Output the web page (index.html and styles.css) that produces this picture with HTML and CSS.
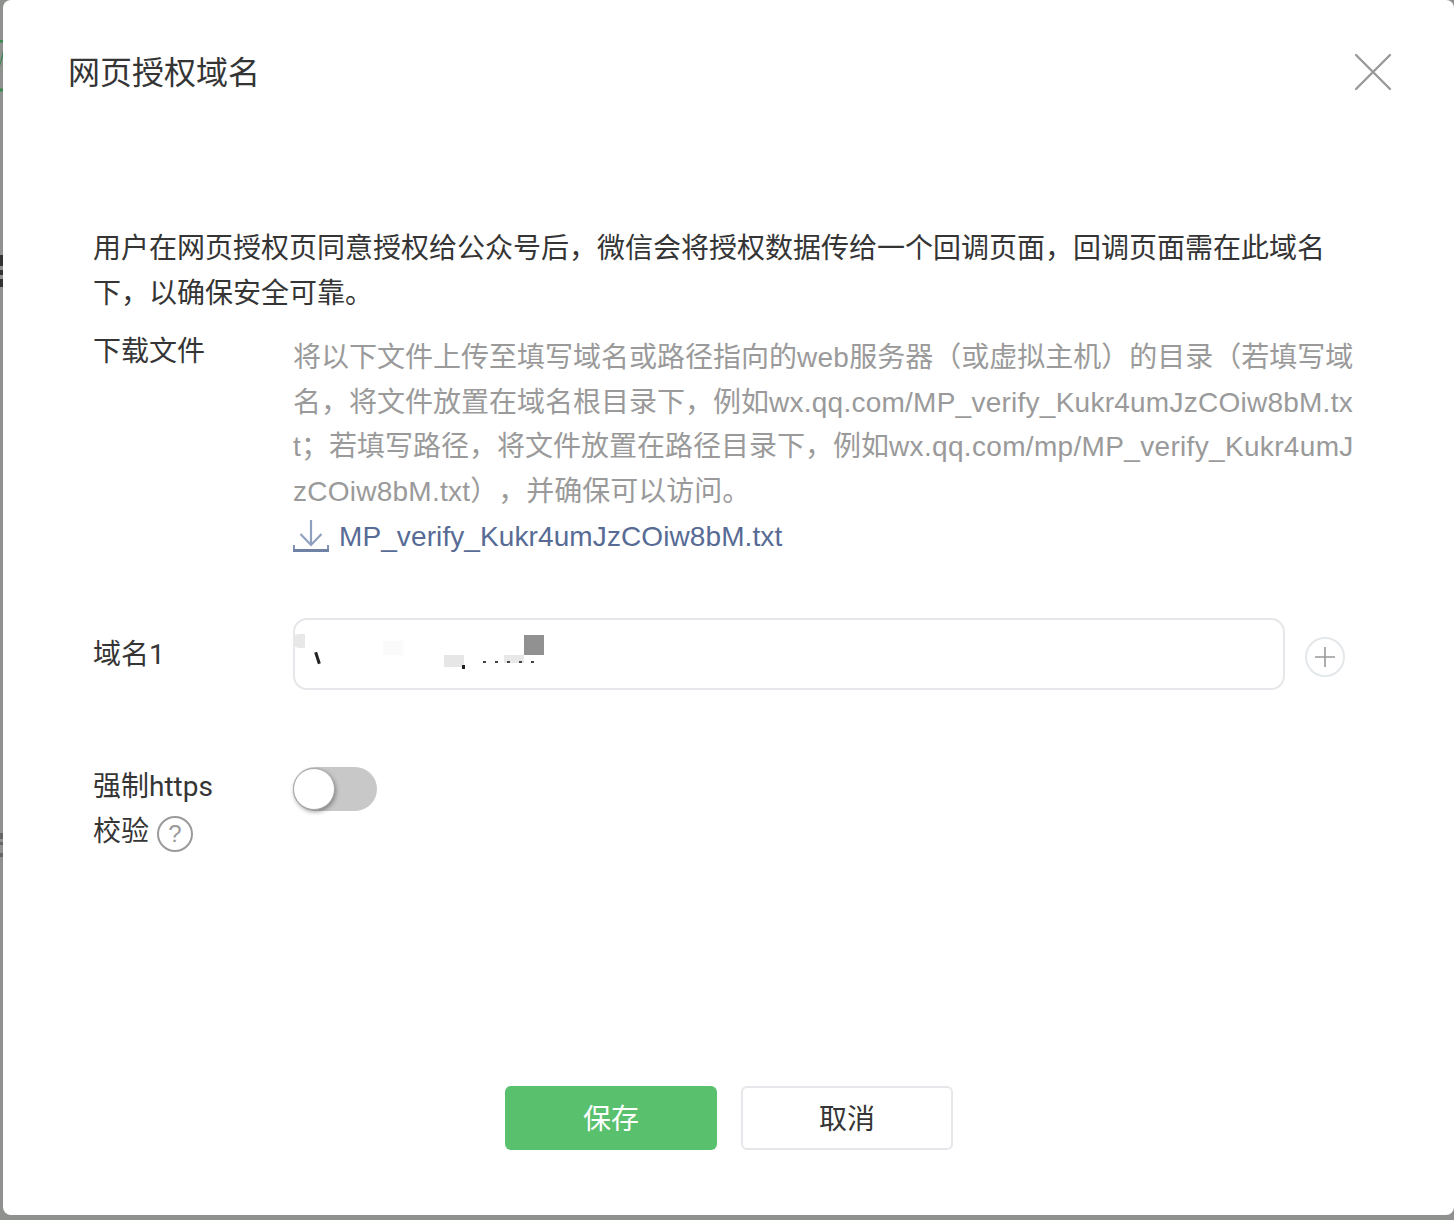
FILE: index.html
```html
<!DOCTYPE html>
<html lang="zh-CN">
<head>
<meta charset="utf-8">
<title>网页授权域名</title>
<link rel="stylesheet" href="styles.css">
</head>
<body>
<div class="backdrop">
  <svg class="bg-frag" width="3" height="900" viewBox="0 0 3 900">
    <path d="M0 40h3v2.500H0z M0 88.500h3v3H0z" fill="#3a8a50"/>
    <path d="M0 63 L3 50 V57 L0 66z" fill="#3f8a55"/>
    <path d="M0 255h3v11H0z M0 270h3v5H0z M0 279h3v8H0z" fill="#333"/>
    <path d="M0 833h3v6H0z M0 842h3v3H0z M0 853h3v4H0z" fill="#666"/>
  </svg>
  <div class="dialog">
    <header class="dialog-head">
      <h1 class="dialog-title">网页授权域名</h1>
      <button class="close" aria-label="关闭">
        <svg width="38" height="38" viewBox="0 0 38 38"><path d="M2 2 L36 36 M36 2 L2 36" stroke="#999" stroke-width="2.400" stroke-linecap="round" fill="none"/></svg>
      </button>
    </header>
    <main class="dialog-body">
      <p class="intro">用户在网页授权页同意授权给公众号后，微信会将授权数据传给一个回调页面，回调页面需在此域名<br>下，以确保安全可靠。</p>
      <section class="row row-file">
        <div class="label">下载文件</div>
        <div class="content">
          <p class="hint">将以下文件上传至填写域名或路径指向的<span class="latin">web</span>服务器（或虚拟主机）的目录（若填写域<br>名，将文件放置在域名根目录下，例如<span class="latin">wx.qq.com/MP_verify_Kukr4umJzCOiw8bM.tx</span><br><span class="latin">t</span>；若填写路径，将文件放置在路径目录下，例如<span class="latin latin-wide">wx.qq.com/mp/MP_verify_Kukr4umJ</span><br><span class="latin">zCOiw8bM.txt</span>），并确保可以访问。</p>
          <a class="file-link" href="#">
            <svg class="dl-icon" width="36" height="34" viewBox="0 0 36 34"><path d="M18 2 V27 M7.500 16 L18 27 L28.500 16" stroke="#8fa0bf" stroke-width="2.200" fill="none"/><path d="M1 27 V32.500 H35 V27" stroke="#8193b5" stroke-width="2" fill="none"/><path d="M0 32.500 H36" stroke="#6f82a6" stroke-width="3"/></svg>
            <span>MP_verify_Kukr4umJzCOiw8bM.txt</span>
          </a>
        </div>
      </section>
      <section class="row row-domain">
        <div class="label label-domain">域名1</div>
        <div class="input">
          <span class="blot blot-a"></span>
          <span class="blot blot-b"></span>
          <span class="blot blot-c"></span>
          <span class="blot blot-d"></span>
          <span class="blot blot-e"></span>
          <span class="blot blot-f"></span>
          <span class="blot blot-g"></span>
          <span class="blot blot-h"></span>
        </div>
        <button class="add" aria-label="添加">
          <svg width="20" height="20" viewBox="0 0 20 20"><path d="M10 0 V20 M0 10 H20" stroke="#999" stroke-width="1.600"/></svg>
        </button>
      </section>
      <section class="row row-https">
        <div class="label label-https">强制https<br>校验 <span class="help">?</span></div>
        <div class="switch"><span class="knob"></span></div>
      </section>
    </main>
    <footer class="dialog-foot">
      <button class="btn btn-primary">保存</button>
      <button class="btn btn-default">取消</button>
    </footer>
  </div>
</div>
</body>
</html>
```
FILE: styles.css
```css
* { box-sizing: border-box; }
html, body { margin: 0; height: 100%; }
body {
  font-family: "Liberation Sans", "Noto Sans CJK SC", sans-serif;
  color: #353535;
  background: #8f918f;
  overflow: hidden;
}
.backdrop {
  position: relative;
  height: 1220px;
  padding: 0 0 5px 3px;
  display: flex;
}
.bg-frag { position: absolute; left: 0; top: 0; display: block; }
.dialog {
  flex: 1;
  background: #fff;
  border-radius: 8px;
  display: flex;
  flex-direction: column;
}
.dialog-head {
  height: 145px;
  padding: 54px 62px 0 65px;
  display: flex;
  justify-content: space-between;
  align-items: flex-start;
}
.dialog-title {
  margin: 0;
  font-size: 32px;
  font-weight: 400;
  line-height: 38px;
  color: #353535;
}
.close {
  width: 38px;
  height: 38px;
  margin-top: -1px;
  padding: 0;
  border: 0;
  background: none;
  display: block;
}
.close svg { display: block; }
.dialog-body {
  flex: 1;
  padding: 81px 0 0 90px;
}
.intro {
  margin: 0;
  font-size: 28px;
  line-height: 45px;
  white-space: nowrap;
  text-spacing-trim: space-all;
}
.row { display: flex; }
.label {
  width: 200px;
  flex: none;
  font-size: 28px;
  line-height: 45px;
}
.label-domain, .label-https {
  font-family: Roboto, "Noto Sans CJK SC", sans-serif;
}
.row-file { margin-top: 13px; }
.content { padding-top: 7px; }
.hint {
  margin: 0;
  font-size: 28px;
  line-height: 44.6px;
  color: #9a9a9a;
  white-space: nowrap;
  text-spacing-trim: space-all;
}
.latin { letter-spacing: .25px; }
.latin-wide { letter-spacing: .33px; }
.file-link {
  display: flex;
  align-items: center;
  gap: 10px;
  height: 45px;
  font-size: 28px;
  letter-spacing: .1px;
  color: #576b95;
  text-decoration: none;
  white-space: nowrap;
}
.dl-icon { display: block; margin-top: -3px; }
.row-domain {
  margin-top: 59px;
  align-items: flex-start;
}
.label-domain { padding-top: 14px; }
.input {
  position: relative;
  width: 992px;
  height: 72px;
  border: 2px solid #e7e7eb;
  border-radius: 14px;
}
.blot { position: absolute; }
.blot-a { left: -2px; top: 14px; width: 12px; height: 14px; background: #e8e8e8; border-radius: 6px 0 0 6px; }
.blot-b { left: 229px; top: 15px; width: 20px; height: 20px; background: #919191; }
.blot-c { left: 149px; top: 35px; width: 20px; height: 12px; background: #e6e6e6; }
.blot-d { left: 209px; top: 35px; width: 20px; height: 8px; background: #e8e8e8; }
.blot-e { left: 21px; top: 32px; width: 3px; height: 12px; background: #222; transform: rotate(-18deg); }
.blot-f { left: 167px; top: 45px; width: 3px; height: 4px; background: #222; }
.blot-g { left: 88px; top: 21px; width: 20px; height: 14px; background: #fafafa; }
.blot-h { left: 188px; top: 41px; width: 52px; height: 2px; background: repeating-linear-gradient(90deg, #444 0 3px, transparent 3px 12px); }
.add {
  width: 40px;
  height: 40px;
  margin: 19px 0 0 20px;
  padding: 0;
  border: 2px solid #e4e8eb;
  border-radius: 50%;
  background: #fff;
  display: flex;
  align-items: center;
  justify-content: center;
}
.add svg { display: block; }
.row-https { margin-top: 77px; }
.label-https { margin-top: -3px; }
.help {
  display: inline-flex;
  align-items: center;
  justify-content: center;
  width: 36px;
  height: 36px;
  margin-left: 1px;
  border: 2px solid #9a9a9a;
  border-radius: 50%;
  font-family: "Liberation Sans", sans-serif;
  font-size: 24px;
  line-height: 1;
  color: #9a9a9a;
  vertical-align: -1px;
}
.switch {
  position: relative;
  width: 84px;
  height: 44px;
  border-radius: 22px;
  background: #c8c8c8;
}
.knob {
  position: absolute;
  left: 0;
  top: 1px;
  width: 42px;
  height: 42px;
  border-radius: 50%;
  background: #fff;
  border: 1px solid #a8a8a8;
  box-shadow: 1px 2px 4px rgba(0, 0, 0, .35);
}
.dialog-foot {
  height: 129px;
  display: flex;
  justify-content: center;
  gap: 24px;
  padding-left: 1px;
}
.btn {
  width: 212px;
  height: 64px;
  border-radius: 6px;
  font-family: inherit;
  font-size: 28px;
  padding: 0 0 2px;
}
.btn-primary { background: #59c06e; border: 0; color: #fff; }
.btn-default { background: #fff; border: 2px solid #e7e7eb; color: #353535; }
```
